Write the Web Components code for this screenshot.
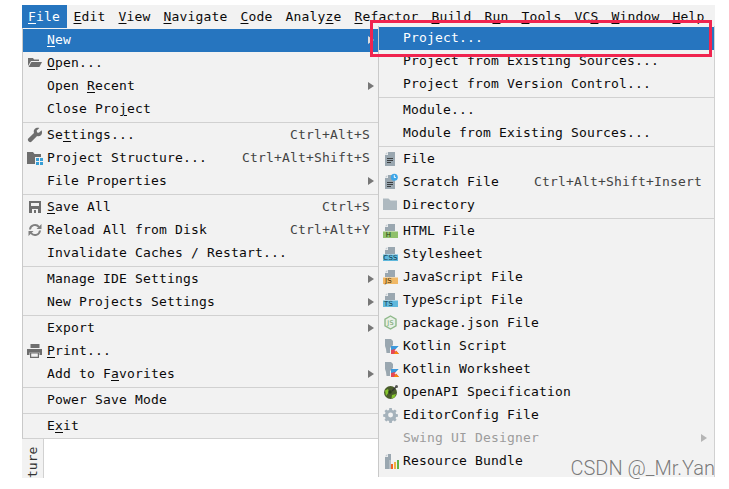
<!DOCTYPE html>
<html>
<head>
<meta charset="utf-8">
<title>File menu</title>
<style>
    html, body { margin: 0; padding: 0; background: white; overflow: hidden; }
    body { font-family: "DejaVu Sans Mono", monospace; font-size: 13px; color: #0a0a0a; }
    u { text-underline-offset: 2px; text-decoration-thickness: 1px; }
</style>
</head>
<body>
<ide-window>
    <ide-menubar>
        <bar-item active><u>F</u>ile</bar-item>
        <bar-item><u>E</u>dit</bar-item>
        <bar-item><u>V</u>iew</bar-item>
        <bar-item><u>N</u>avigate</bar-item>
        <bar-item><u>C</u>ode</bar-item>
        <bar-item>Analy<u>z</u>e</bar-item>
        <bar-item><u>R</u>efactor</bar-item>
        <bar-item><u>B</u>uild</bar-item>
        <bar-item>R<u>u</u>n</bar-item>
        <bar-item><u>T</u>ools</bar-item>
        <bar-item>VC<u>S</u></bar-item>
        <bar-item><u>W</u>indow</bar-item>
        <bar-item><u>H</u>elp</bar-item>
    </ide-menubar>

    <ide-menu slot="file">
        <menu-row selected arrow><u>N</u>ew</menu-row>
        <menu-row icon="open"><u>O</u>pen...</menu-row>
        <menu-row arrow>Open <u>R</u>ecent</menu-row>
        <menu-row>Close Pro<u>j</u>ect</menu-row>
        <menu-sep></menu-sep>
        <menu-row icon="wrench" keys="Ctrl+Alt+S">Se<u>t</u>tings...</menu-row>
        <menu-row icon="structure" keys="Ctrl+Alt+Shift+S">Project Structure...</menu-row>
        <menu-row arrow>File Properties</menu-row>
        <menu-sep></menu-sep>
        <menu-row icon="save" keys="Ctrl+S"><u>S</u>ave All</menu-row>
        <menu-row icon="reload" keys="Ctrl+Alt+Y">Reload All from Disk</menu-row>
        <menu-row>Invalidate Caches / Restart...</menu-row>
        <menu-sep></menu-sep>
        <menu-row arrow>Manage IDE Settings</menu-row>
        <menu-row arrow>New Projects Settings</menu-row>
        <menu-sep></menu-sep>
        <menu-row arrow>Export</menu-row>
        <menu-row icon="print"><u>P</u>rint...</menu-row>
        <menu-row arrow>Add to F<u>a</u>vorites</menu-row>
        <menu-sep></menu-sep>
        <menu-row>Power Save Mode</menu-row>
        <menu-sep></menu-sep>
        <menu-row>E<u>x</u>it</menu-row>
    </ide-menu>

    <ide-menu slot="new">
        <menu-row selected>Project...</menu-row>
        <menu-row>Project from Existing Sources...</menu-row>
        <menu-row>Project from Version Control...</menu-row>
        <menu-sep></menu-sep>
        <menu-row>Module...</menu-row>
        <menu-row>Module from Existing Sources...</menu-row>
        <menu-sep></menu-sep>
        <menu-row icon="file">File</menu-row>
        <menu-row icon="scratch" keys="Ctrl+Alt+Shift+Insert">Scratch File</menu-row>
        <menu-row icon="directory">Directory</menu-row>
        <menu-sep></menu-sep>
        <menu-row icon="html">HTML File</menu-row>
        <menu-row icon="css">Stylesheet</menu-row>
        <menu-row icon="js">JavaScript File</menu-row>
        <menu-row icon="ts">TypeScript File</menu-row>
        <menu-row icon="pkg">package.json File</menu-row>
        <menu-row icon="kotlin">Kotlin Script</menu-row>
        <menu-row icon="kotlin">Kotlin Worksheet</menu-row>
        <menu-row icon="openapi">OpenAPI Specification</menu-row>
        <menu-row icon="gear">EditorConfig File</menu-row>
        <menu-row disabled arrow>Swing UI Designer</menu-row>
        <menu-row icon="bundle">Resource Bundle</menu-row>
    </ide-menu>
</ide-window>

<script>
// all the little action icons, 16x16 box
const ICONS = {
    open: `<path fill="#6e6e6e" d="M1 3h5l1 1.500h5V6H4L1 11z"/><path fill="#6e6e6e" d="M4.400 7H15l-2.600 5H1.600z"/>`,
    wrench: `<path fill="#6e6e6e" d="M14.600 3.200l-2.700 2.600-1.800-.4-.4-1.800L12.400 1c-1.800-.6-3.600-.2-4.700 1-1 1.100-1.200 2.600-.7 3.900L1.300 11.600c-.6.6-.6 1.700 0 2.300l.8.8c.6.6 1.700.6 2.300 0l5.700-5.700c1.300.5 2.800.2 3.900-.8 1.100-1.200 1.400-3.100.6-5z"/>`,
    structure: `<path fill="#6e6e6e" d="M0 2h6l1.500 2H14v3H8v7H0z"/><rect x="9" y="8" width="3" height="3" fill="#389fd6"/><rect x="13" y="8" width="3" height="3" fill="#389fd6"/><rect x="9" y="12" width="3" height="3" fill="#389fd6"/><rect x="13" y="12" width="3" height="3" fill="#389fd6"/>`,
    save: `<path fill="#6e6e6e" fill-rule="evenodd" d="M2 2h12v12H2zM4 4v3h8V4zM5 10v4h6v-4zM7 11h2v3H7z"/>`,
    reload: `<path fill="none" stroke="#7f7f7f" stroke-width="2" d="M3 7.500A5 5 0 0 1 12 5M13 8.500A5 5 0 0 1 4 11"/><path fill="#7f7f7f" d="M14.500 2v5h-5zM1.500 14V9h5z"/>`,
    print: `<rect x="3.500" y="1" width="9" height="4" fill="#6e6e6e"/><path fill="#6e6e6e" d="M0 6h15v6h-2.500V9.500h-10V12H0z"/><path fill="none" stroke="#6e6e6e" stroke-width="1.200" d="M3.600 10h7.800v4.400H3.600z"/>`,
    file: `<path fill="#9aa7b0" d="M5 1h7v14H2V4h3z"/><path fill="#c3ccd2" d="M4.300 1v2.300H2z"/><path stroke="#3c3f41" stroke-width="1" d="M4 7.500h6M4 9.500h6M4 11.500h4"/>`,
    scratch: `<path fill="#9aa7b0" d="M5 1h7v14H2V4h3z"/><path fill="#c3ccd2" d="M4.300 1v2.300H2z"/><path stroke="#3c3f41" stroke-width="1" d="M4 8.500h6M4 10.500h6M4 12.500h4"/><circle cx="11.300" cy="3.200" r="3.500" fill="#3ea6e8"/><path fill="none" stroke="#fff" stroke-width="1" d="M11.300 1.200v2.300h1.500"/>`,
    directory: `<path fill="#aeb9c0" d="M0 1.500h5.500l2 2H14V13H0z"/>`,
    kotlin: `<path fill="#9aa7b0" d="M2 1h6l2 2v4l-3 3v5H3.500L3 11 2 8z"/><path fill="#3c99dc" d="M8 8h8l-8 8z"/><path fill="#e44857" d="M8 16v-4l4-1 4 5z"/><path fill="#f88909" d="M11 16l2-3 3 3z"/><path fill="#fff" d="M11.500 12.500L16 8v1.500l-3.500 4z" opacity=".8"/>`,
    openapi: `<circle cx="7.500" cy="8.500" r="6.500" fill="#4a5c2c"/><path fill="#85c62d" d="M2 6.500l3-1.500 1 3-3 4zM9 11l4-1-1.500 3.500-3 1z"/><circle cx="7" cy="8" r="1.800" fill="#2b3a1d"/><path stroke="#333" stroke-width="1.200" d="M9 7l4-4"/><circle cx="13.500" cy="2.500" r="1.500" fill="#555"/>`,
    gear: `<g transform="translate(1 1) scale(.82)" fill="#a5b2bb"><path fill-rule="evenodd" d="M6.500 0h3l.4 2.300 1.500.7 1.900-1.300 2.100 2.100-1.300 1.900.7 1.500 2.200.4v3l-2.200.4-.7 1.500 1.300 1.900-2.100 2.100-1.900-1.300-1.500.7-.4 2.300h-3l-.4-2.300-1.500-.7-1.900 1.300-2.100-2.100 1.300-1.900-.7-1.500-2.200-.4v-3l2.200-.4.7-1.500-1.300-1.900 2.100-2.100 1.900 1.300 1.500-.7zM8 5.500a3 3 0 1 0 0 6 3 3 0 0 0 0-6z"/></g>`,
    bundle: `<path fill="#9aa7b0" d="M5 1h3v6H6v9H2V4h3z"/><path fill="#c3ccd2" d="M4.300 1v2.300H2z"/><path fill="#9aa7b0" opacity=".7" d="M6 7h2v9H6z"/><rect x="8" y="11" width="2" height="5" fill="#f26522"/><rect x="11" y="9" width="2" height="7" fill="#f4af3d"/><rect x="14" y="7" width="2" height="9" fill="#62b543"/>`,
    pkg: `<path fill="#e8efe6" stroke="#8fb98a" stroke-width="1.400" d="M7.500 1l5.500 3.200v6.600L7.500 14 2 10.800V4.200z"/><text x="7.500" y="10.300" font-family="DejaVu Sans" font-size="6.500" text-anchor="middle" fill="#6f9f69">JS</text>`
};
// html, css, js, ts share the same shape: page with a coloured label on it
function labelled(text, colour, textColour) {
    return `<path fill="#9aa7b0" d="M5 1h7v7H2V4h3z"/><path fill="#c3ccd2" d="M4.300 1v2.300H2z"/><rect x="0" y="8.500" width="15" height="6.500" fill="${colour}"/>` +
        `<text x="${text.length > 2 ? 7.5 : 5.5}" y="14.400" font-family="DejaVu Sans" font-size="7" text-anchor="middle" fill="${textColour}">${text}</text>`;
}
ICONS.html = labelled('H', '#8fc06a', '#1d3a10');
ICONS.css = labelled('CSS', '#5fb8dc', '#12384a');
ICONS.js = labelled('JS', '#f0b865', '#4a3108');
ICONS.ts = labelled('TS', '#5fb8dc', '#12384a');

class IdeWindow extends HTMLElement {
    constructor() {
        super();
        this.attachShadow({mode: 'open'});
        this.shadowRoot.innerHTML = `
            <style>
                :host { display: block; position: relative; width: 729px; height: 489px; padding: 5px 14px 0 22px; box-sizing: border-box; }
                .below { display: flex; width: 356px; flex-direction: column; }
                .strip {
                    width: 22px; height: 39px; box-sizing: border-box;
                    background: #f2f2f2; border-right: 1px solid #d1d1d1;
                    display: flex; justify-content: center; overflow: hidden;
                    font-size: 13px; color: #333;
                }
                .strip span { writing-mode: vertical-rl; transform: rotate(180deg); line-height: 22px; }
                .sub { position: absolute; left: 378px; top: 26px; }
                .red {
                    position: absolute; left: 370px; top: 20px; width: 336px; height: 31px;
                    border: 3px solid #f0244f;
                }
                .csdn {
                    position: absolute; right: 14px; top: 456px;
                    font: 300 20px Roboto, sans-serif; color: rgba(90, 90, 90, .8);
                    white-space: nowrap;
                }
            </style>
            <slot></slot>
            <div class="below">
                <slot name="file"></slot>
                <div class="strip"><span>ture</span></div>
            </div>
            <div class="sub"><slot name="new"></slot></div>
            <div class="red"></div>
            <div class="csdn">CSDN @_Mr.Yan</div>
        `;
    }
}

class IdeMenubar extends HTMLElement {
    constructor() {
        super();
        this.attachShadow({mode: 'open'});
        this.shadowRoot.innerHTML = `
            <style>
                :host { display: flex; height: 23px; background: #f2f2f2; }
            </style>
            <slot></slot>
        `;
    }
}

class BarItem extends HTMLElement {
    constructor() {
        super();
        this.attachShadow({mode: 'open'});
        this.shadowRoot.innerHTML = `
            <style>
                :host { display: block; padding: 0 6.500px; line-height: 23px; letter-spacing: .17px; white-space: nowrap; }
                :host([active]) { background: #2675bf; color: white; padding: 0 7px 0 6px; }
            </style>
            <slot></slot>
        `;
    }
}

class IdeMenu extends HTMLElement {
    constructor() {
        super();
        this.attachShadow({mode: 'open'});
        this.shadowRoot.innerHTML = `
            <style>
                :host {
                    display: block; box-sizing: border-box; background: #f2f2f2;
                    border-left: 1px solid #c9c9c9; border-bottom: 1px solid #d1d1d1;
                    --keys-gap: 4px;
                    --arrow-gap: 0px;
                }
                :host([slot=file]) { width: 356px; padding-top: 1px; }
                :host([slot=new]) {
                    width: 337px; padding: 1px 0 4px 0; border-right: 1px solid #d1d1d1; border-bottom: none;
                    --keys-gap: 8px;
                    --arrow-gap: 3px;
                }
            </style>
            <slot></slot>
        `;
    }
}

class MenuSep extends HTMLElement {
    constructor() {
        super();
        this.attachShadow({mode: 'open'});
        this.shadowRoot.innerHTML = `
            <style>
                :host { display: block; height: 3px; padding: 1px 0; box-sizing: border-box; }
                div { height: 1px; background: #d1d1d1; }
            </style>
            <div></div>
        `;
    }
}

class MenuRow extends HTMLElement {
    constructor() {
        super();
        this.attachShadow({mode: 'open'});
        const name = this.getAttribute('icon');
        const keys = this.getAttribute('keys');
        const icon = name ? `<svg width="16" height="16" viewBox="0 0 16 16">${ICONS[name]}</svg>` : '';
        this.shadowRoot.innerHTML = `
            <style>
                :host {
                    display: flex; align-items: center; height: 23px; box-sizing: border-box;
                    padding: 0 4px 2px 4px;
                    letter-spacing: .17px; white-space: nowrap;
                }
                :host([selected]) { background: #2675bf; color: white; }
                :host([disabled]) { color: #9c9c9c; }
                .icon { width: 16px; height: 16px; margin-right: 4px; flex: none; }
                svg { display: block; overflow: visible; }
                .text { flex: 1; }
                .keys { color: #444; margin-right: var(--keys-gap); }
                .arrow {
                    width: 0; height: 0; margin-right: var(--arrow-gap);
                    border: 4px solid transparent; border-left: 6px solid #777; border-right: 0;
                }
                :host([selected]) .arrow { border-left-color: #ddd; }
                :host([disabled]) .arrow { border-left-color: #b5b5b5; }
            </style>
            <div class="icon">${icon}</div>
            <div class="text"><slot></slot></div>
            ${keys ? `<div class="keys">${keys}</div>` : ''}
            ${this.hasAttribute('arrow') ? '<div class="arrow"></div>' : ''}
        `;
    }
}

window.customElements.define('ide-window', IdeWindow);
window.customElements.define('ide-menubar', IdeMenubar);
window.customElements.define('bar-item', BarItem);
window.customElements.define('ide-menu', IdeMenu);
window.customElements.define('menu-sep', MenuSep);
window.customElements.define('menu-row', MenuRow);
</script>
</body>
</html>
